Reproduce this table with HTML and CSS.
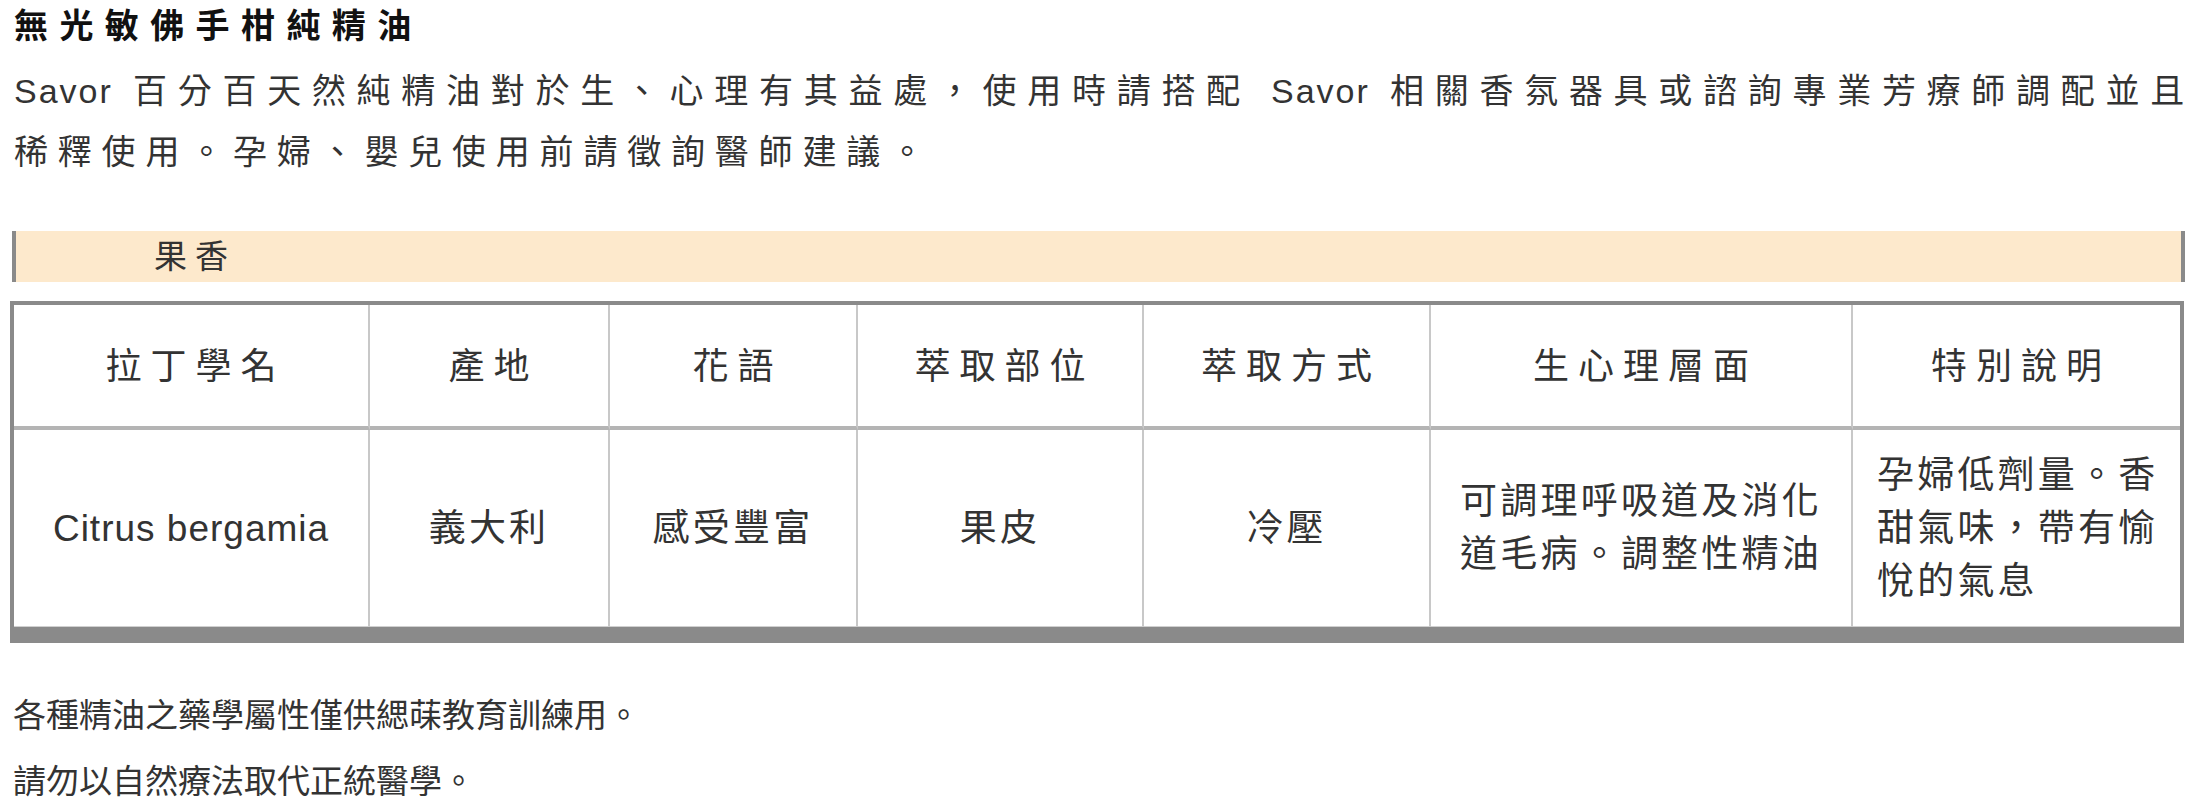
FILE: index.html
```html
<!DOCTYPE html>
<html>
<head>
    <meta charset="utf-8">
    <title>無光敏佛手柑純精油</title>
    <link rel="stylesheet" href="styles.css">
</head>
<body>
    <div class="page">
        <h1 class="title">無光敏佛手柑純精油</h1>
        <p class="intro"><span class="brand">Savor</span> 百分百天然純精油對於生、心理有其益處，使用時請搭配 <span class="brand">Savor</span> 相關香氛器具或諮詢專業芳療師調配並且稀釋使用。孕婦、嬰兒使用前請徵詢醫師建議。</p>

        <div class="group"><span class="group-name">果香</span></div>

        <table class="oil-table">
            <colgroup>
                <col class="col-latin">
                <col class="col-origin">
                <col class="col-meaning">
                <col class="col-part">
                <col class="col-method">
                <col class="col-effect">
                <col class="col-note">
            </colgroup>
            <thead>
                <tr>
                    <th>拉丁學名</th>
                    <th>產地</th>
                    <th>花語</th>
                    <th>萃取部位</th>
                    <th>萃取方式</th>
                    <th>生心理層面</th>
                    <th>特別說明</th>
                </tr>
            </thead>
            <tbody>
                <tr>
                    <td class="latin">Citrus bergamia</td>
                    <td>義大利</td>
                    <td>感受豐富</td>
                    <td>果皮</td>
                    <td>冷壓</td>
                    <td>可調理呼吸道及消化道毛病。調整性精油</td>
                    <td class="note">孕婦低劑量。香甜氣味，帶有愉悅的氣息</td>
                </tr>
            </tbody>
        </table>

        <div class="notes">
            <p>各種精油之藥學屬性僅供緦菋教育訓練用。</p>
            <p>請勿以自然療法取代正統醫學。</p>
        </div>
    </div>
</body>
</html>
```
FILE: styles.css
```css
body {
    margin: 0;
    font-family: "Liberation Sans", "Noto Sans CJK TC", sans-serif;
    color: #333;
    background-color: #fff;
}

.page {
    padding: 0 13px 0 10px;
}

.title {
    margin: 0;
    padding-left: 4px;
    font-size: 34px;
    line-height: 52px;
    font-weight: bold;
    letter-spacing: 11.4px;
    color: #111;
}

.intro {
    margin: 9px -10px 0 0;
    padding-left: 4px;
    font-size: 34px;
    line-height: 61px;
    letter-spacing: 9.8px;
    text-align: justify;
}

/* keep the brand name tight when the line is justified */
.intro .brand {
    display: inline-block;
    letter-spacing: 2px;
}

/* category bar above the table */
.group {
    margin: 48px -1px 0 2px;
    height: 51px;
    box-sizing: border-box;
    border-left: 4px solid #8a8a8a;
    border-right: 4px solid #8a8a8a;
    background-color: #fde9cc;
}

.group-name {
    display: inline-block;
    width: 358px;
    text-align: center;
    font-size: 33px;
    line-height: 51px;
    letter-spacing: 8px;
}

.oil-table {
    margin-top: 19px;
    width: 100%;
    table-layout: fixed;
    border-collapse: separate;
    border-spacing: 0;
    border: 4px solid #8a8a8a;
    border-bottom-width: 16px;
}

.col-latin { width: 356px; }
.col-origin { width: 240px; }
.col-meaning { width: 248px; }
.col-part { width: 286px; }
.col-method { width: 287px; }
.col-effect { width: 422px; }
.col-note { width: 327px; }

.oil-table th,
.oil-table td {
    box-sizing: border-box;
    padding: 0 24px;
    border-right: 2px solid #c8c8c8;
    text-align: center;
    vertical-align: middle;
    color: #333;
}

.oil-table th:last-child,
.oil-table td:last-child {
    border-right: none;
}

.oil-table th {
    height: 125px;
    padding: 0 24px 6px 33px;
    border-bottom: 4px solid #b4b4b4;
    font-size: 36px;
    font-weight: normal;
    letter-spacing: 9px;
}

.oil-table td {
    height: 197px;
    border-bottom: 1px solid #d0d0d0;
    font-size: 37px;
    line-height: 53px;
    letter-spacing: 3.2px;
}

.oil-table td.latin {
    letter-spacing: 1px;
}

.oil-table td.note {
    padding-right: 20px;
    text-align: left;
}

.notes {
    margin-top: 50px;
    padding-left: 3px;
    font-size: 33px;
    line-height: 46px;
}

.notes p {
    margin: 0;
}

.notes p + p {
    margin-top: 20px;
}
```
